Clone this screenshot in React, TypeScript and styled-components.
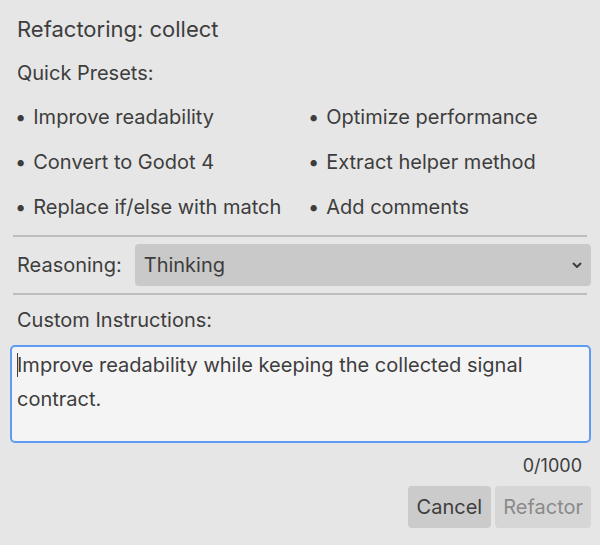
import styled, { createGlobalStyle } from 'styled-components';

const GlobalStyle = createGlobalStyle`
  html, body {
    margin: 0;
    padding: 0;
    background: #e6e6e6;
  }
  body {
    font-family: Inter, "Noto Sans", sans-serif;
    color: #3d3d3d;
  }
`;

const Dialog = styled.div`
  width: 600px;
  height: 545px;
  box-sizing: border-box;
  padding: 12px 9px 0 10px;
  display: flex;
  flex-direction: column;
`;

const Title = styled.div`
  font-size: 22px;
  line-height: 34px;
  padding-left: 7px;
`;

const Label = styled.div<{ $top?: number }>`
  font-size: 20px;
  line-height: 26px;
  padding-left: 7px;
  margin-top: ${p => p.$top ?? 0}px;
`;

const Presets = styled.div`
  display: grid;
  grid-template-columns: 293px 1fr;
  row-gap: 19px;
  padding: 18px 0 0 5px;
  margin-bottom: 15px;
`;

const Preset = styled.div`
  font-size: 20px;
  line-height: 26px;
  cursor: pointer;
  &::before {
    content: '•';
    margin-right: 7px;
  }
`;

const Separator = styled.div`
  height: 2px;
  background: #bdbdbd;
  margin: 0 4px 0 3px;
`;

const Row = styled.div`
  display: flex;
  align-items: center;
  gap: 13px;
  padding: 7px 0 7px 7px;
`;

const RowLabel = styled.div`
  font-size: 20px;
  line-height: 26px;
`;

const Select = styled.div`
  flex: 1;
  height: 42px;
  box-sizing: border-box;
  background: #c9c9c9;
  border-radius: 4px;
  display: flex;
  align-items: center;
  justify-content: space-between;
  padding: 0 9px 0 9px;
  font-size: 20px;
`;

const Chevron = styled.svg`
  width: 10px;
  height: 6px;
`;

const TextArea = styled.div`
  margin-top: 12px;
  height: 98px;
  box-sizing: border-box;
  border: 2px solid #5d9bf5;
  border-radius: 5px;
  background: #f4f4f4;
  padding: 1px 5px;
  font-size: 20px;
  line-height: 34px;
`;

const Caret = styled.span`
  display: inline-block;
  width: 1px;
  height: 24px;
  background: #3d3d3d;
  vertical-align: -5px;
  margin-right: -1px;
`;

const Counter = styled.div`
  text-align: right;
  font-size: 18px;
  line-height: 24px;
  margin-top: 11px;
  padding-right: 9px;
`;

const Buttons = styled.div`
  display: flex;
  justify-content: flex-end;
  gap: 4px;
  margin-top: 8px;
`;

const Button = styled.button<{ $disabled?: boolean }>`
  height: 42px;
  border: none;
  border-radius: 4px;
  font-family: Inter, "Noto Sans", sans-serif;
  font-size: 20px;
  padding: 0 ${p => (p.$disabled ? 8 : 9)}px;
  background: ${p => (p.$disabled ? '#d6d6d6' : '#cbcbcb')};
  color: ${p => (p.$disabled ? '#8a8a8a' : '#3d3d3d')};
`;

const presets = [
  'Improve readability',
  'Optimize performance',
  'Convert to Godot 4',
  'Extract helper method',
  'Replace if/else with match',
  'Add comments',
];

export default function App() {
  return (
    <>
      <GlobalStyle />
      <Dialog>
        <Title>Refactoring: collect</Title>
        <Label $top={14}>Quick Presets:</Label>
        <Presets>
          {presets.map(p => (
            <Preset key={p}>{p}</Preset>
          ))}
        </Presets>
        <Separator />
        <Row>
          <RowLabel>Reasoning:</RowLabel>
          <Select>
            Thinking
            <Chevron viewBox="0 0 10 6">
              <path d="M1 1 L5 5 L9 1" fill="none" stroke="#3d3d3d" strokeWidth="2" />
            </Chevron>
          </Select>
        </Row>
        <Separator />
        <Label $top={12}>Custom Instructions:</Label>
        <TextArea>
          <Caret />
          Improve readability while keeping the collected signal contract.
        </TextArea>
        <Counter>0/1000</Counter>
        <Buttons>
          <Button>Cancel</Button>
          <Button $disabled>Refactor</Button>
        </Buttons>
      </Dialog>
    </>
  );
}
